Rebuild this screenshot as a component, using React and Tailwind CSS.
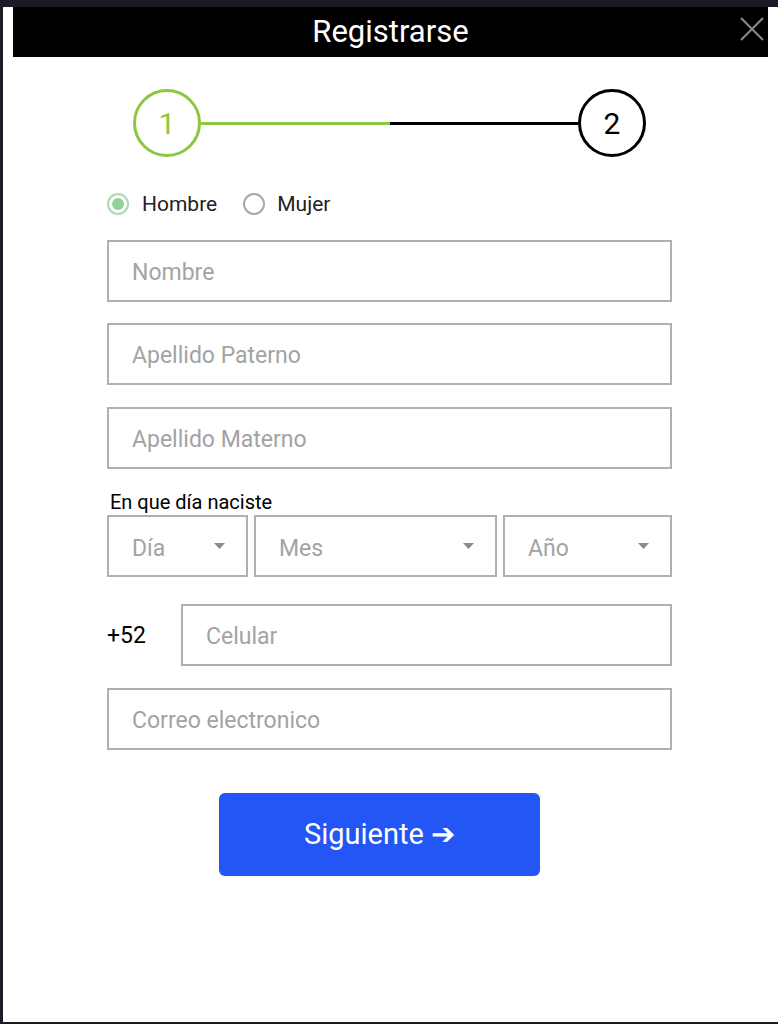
import React from "react";

function Caret() {
  return (
    <svg width="11" height="6" viewBox="0 0 11 6" className="shrink-0">
      <path d="M0 0 L11 0 L5.5 6 Z" fill="#8a8a8a" />
    </svg>
  );
}

function Field({ placeholder, className = "" }) {
  return (
    <div
      className={`flex h-[62px] items-center border-2 border-[#b0b0b0] pl-[23px] pt-[4px] text-[23px] text-[#a3a3a3] ${className}`}
    >
      {placeholder}
    </div>
  );
}

function Select({ label, className = "" }) {
  return (
    <div
      className={`flex h-[62px] items-center justify-between border-2 border-[#b0b0b0] pl-[23px] pr-[21px] ${className}`}
    >
      <span className="pt-[6px] text-[23px] text-[#a3a3a3]">{label}</span>
      <Caret />
    </div>
  );
}

export default function App() {
  return (
    <div
      className="h-[1024px] w-[778px] overflow-hidden bg-[#1c1a26] pl-[3px] pt-[7px]"
      style={{ fontFamily: "Roboto, 'Liberation Sans', sans-serif" }}
    >
      <div className="relative h-[1015px] w-[775px] bg-white">
        <div className="mx-[10px] flex h-[50px] items-center justify-center bg-black pt-[1px] text-[31px] text-white">
          Registrarse
        </div>
        <button className="absolute right-[14px] top-[10px] text-[#8a8a8a]" aria-label="Cerrar">
          <svg width="24" height="24" viewBox="0 0 24 24">
            <path d="M1 1 L23 23 M23 1 L1 23" stroke="#8a8a8a" strokeWidth="2" fill="none" />
          </svg>
        </button>

        <div className="ml-[104px] w-[565px]">
          {/* Stepper */}
          <div className="mt-[32px] flex items-center px-[26px]">
            <div className="flex h-[68px] w-[68px] shrink-0 items-center justify-center rounded-full border-[3px] border-[#8dc63f] text-[30px] text-[#8dc63f]">
              1
            </div>
            <div className="h-[3px] flex-1 bg-[#8dc63f]" />
            <div className="h-[3px] flex-1 bg-black" />
            <div className="flex h-[68px] w-[68px] shrink-0 items-center justify-center rounded-full border-[3px] border-black text-[30px] text-black">
              2
            </div>
          </div>

          {/* Radios */}
          <div className="mt-[35px] flex h-[24px] items-center text-[21px] text-[#222]">
            <span className="flex h-[22px] w-[22px] items-center justify-center rounded-full border-2 border-[#a8dcb0]">
              <span className="h-[12px] w-[12px] rounded-full bg-[#8fd39a]" />
            </span>
            <span className="ml-[13px] pt-[2px]">Hombre</span>
            <span className="ml-[26px] h-[22px] w-[22px] rounded-full border-2 border-[#a8a8a8]" />
            <span className="ml-[12px] pt-[2px]">Mujer</span>
          </div>

          <Field placeholder="Nombre" className="mt-[24px]" />
          <Field placeholder="Apellido Paterno" className="mt-[21px]" />
          <Field placeholder="Apellido Materno" className="mt-[22px]" />

          <div className="mt-[20px] pl-[3px] text-[20px] leading-[26px] text-black">
            En que día naciste
          </div>
          <div className="flex gap-[6px]">
            <Select label="Día" className="w-[141px]" />
            <Select label="Mes" className="w-[243px]" />
            <Select label="Año" className="flex-1" />
          </div>

          <div className="mt-[27px] flex items-center">
            <span className="w-[74px] pt-[3px] text-[23px] text-black">+52</span>
            <Field placeholder="Celular" className="flex-1" />
          </div>

          <Field placeholder="Correo electronico" className="mt-[22px]" />

          <button className="ml-[112px] mt-[43px] flex h-[83px] w-[321px] items-center justify-center rounded-[6px] bg-[#2456f5] text-[29px] text-white">
            Siguiente ➔
          </button>
        </div>
      </div>
    </div>
  );
}
